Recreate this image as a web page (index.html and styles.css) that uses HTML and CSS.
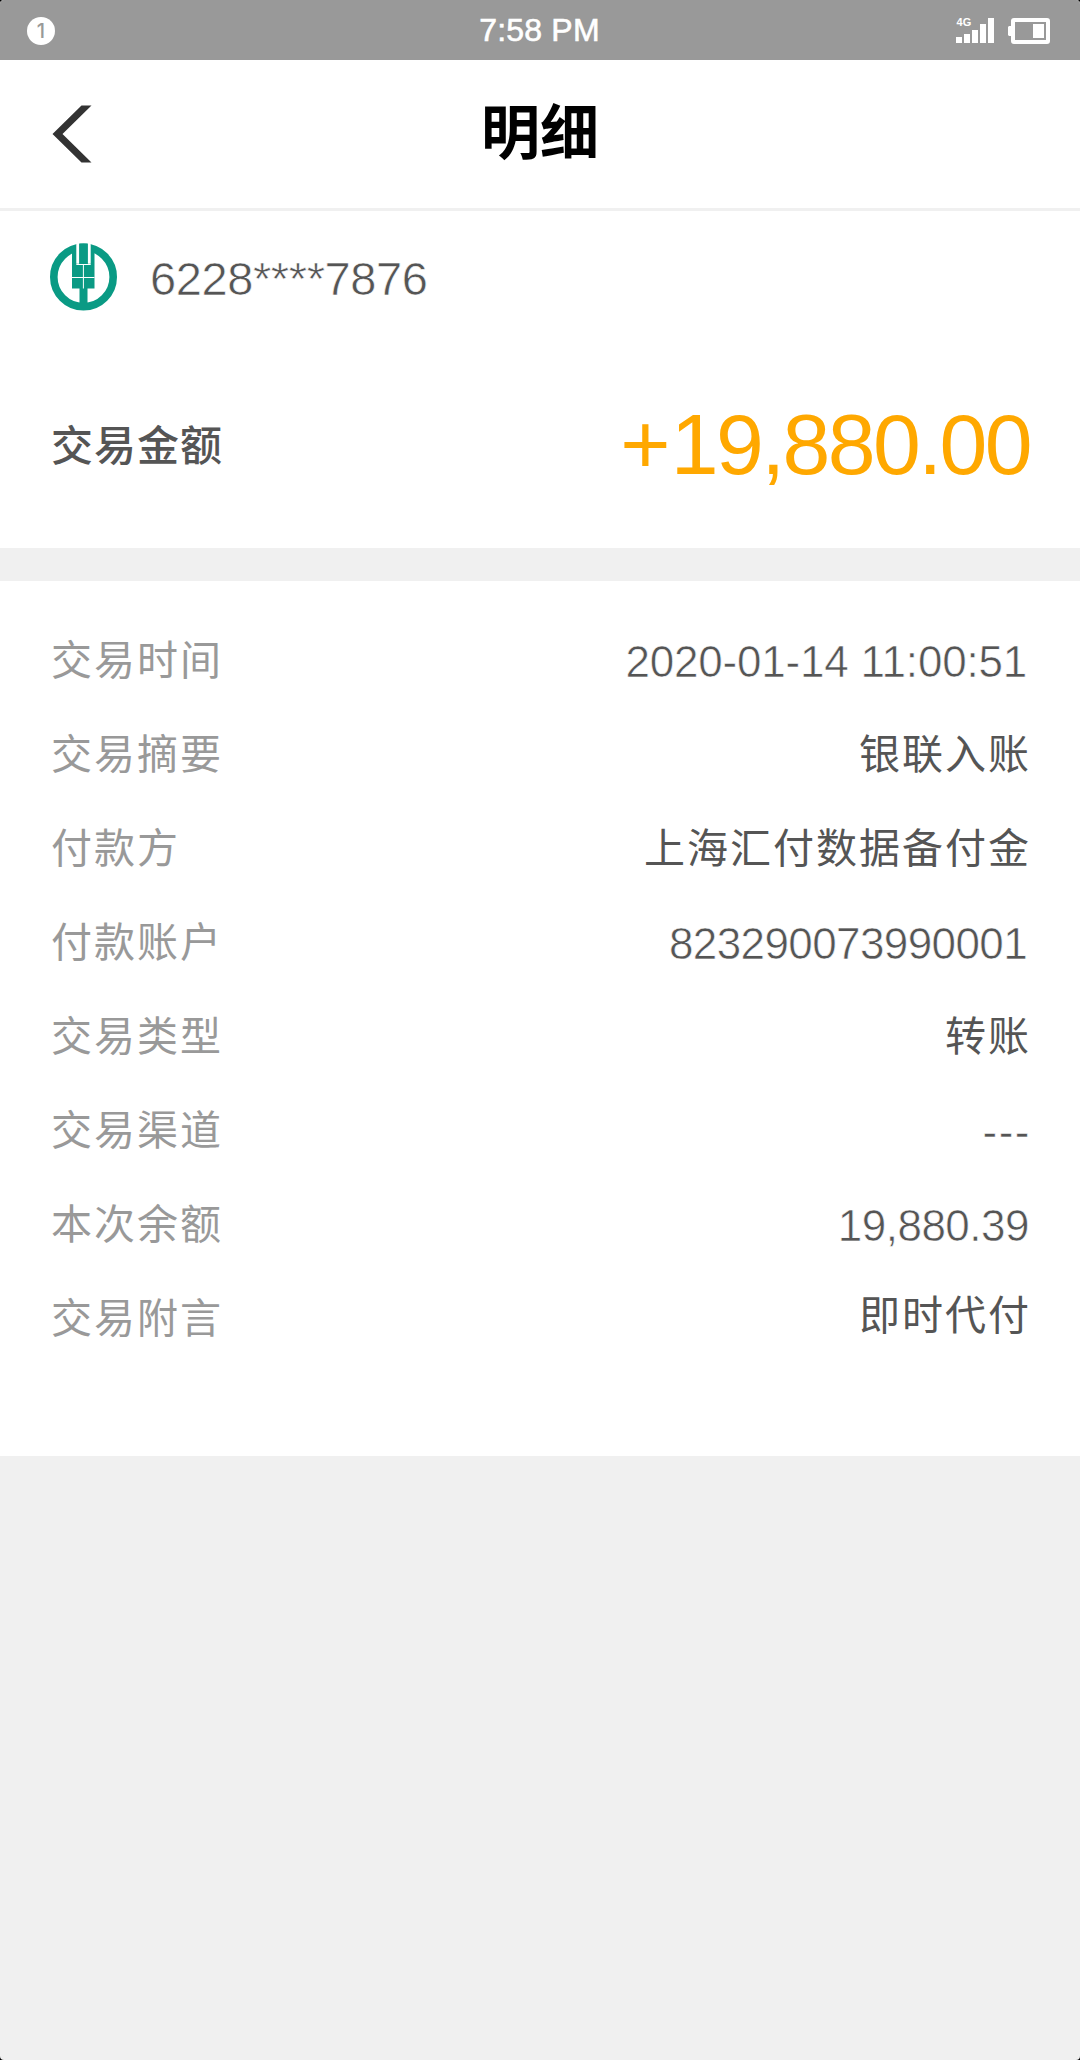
FILE: index.html
```
<!DOCTYPE html>
<html lang="zh-CN">
<head>
    <meta charset="UTF-8">
    <meta name="viewport" content="width=device-width, initial-scale=1.0">
    <title>明细</title>
    <link rel="stylesheet" href="styles.css">
</head>
<body>

    <!-- Status bar -->
    <div class="status-bar">
        <span class="notice">1</span>
        <span class="clock">7:58 PM</span>
        <div class="status-icons">
            <svg class="signal" width="40" height="30" viewBox="0 0 40 30">
                <text x="0.6" y="9.5" class="signal-text">4G</text>
                <path fill="#fff" d="M0 21h6v6H0zM8 18h6v9H8zM16 14h6v13h-6zM24 8h6v19h-6zM32 2h6v25h-6z"/>
            </svg>
            <svg class="battery" width="42" height="26" viewBox="0 0 42 26">
                <rect x="5" y="2" width="35" height="22" rx="1" fill="none" stroke="#fff" stroke-width="4"/>
                <path fill="#fff" d="M1 8h3v10H1l-1-1V9zM25 6h11v14H25z"/>
            </svg>
        </div>
    </div>

    <!-- Header -->
    <header class="header">
        <a href="#" class="back">
            <svg width="40" height="58" viewBox="0 0 40 58">
                <path fill="#333" d="M29.5 0.5H39.5L10.5 29 39.5 57.5H29.5L0.5 29z"/>
            </svg>
        </a>
        <h1>明细</h1>
    </header>

    <!-- Account and amount -->
    <section class="summary">
        <div class="account">
            <svg class="bank-logo" width="68" height="68" viewBox="0 0 68 68">
                <circle cx="34.5" cy="34" r="29.7" fill="none" stroke="#0a9a84" stroke-width="7.6"/>
                <path fill="#0a9a84" d="M23 5h22.500v40.500h-7V63h-8V45.500H23z"/>
                <path fill="#fff" d="M27.300 0h3v20.700h-3zM38.700 0h3v20.700h-3z"/>
                <path fill="#0a9a84" d="M30.300 0.500h8.400v21h-8.400z"/>
                <path fill="none" stroke="#fff" stroke-width="1" d="M27.300 21.500h14.400M23 34.500h22.500M34.400 22v23.500"/>
            </svg>
            <span class="card-no">6228****7876</span>
        </div>
        <div class="amount-row">
            <span class="amount-label">交易金额</span>
            <span class="amount"><span class="sign">+</span>19,880.00</span>
        </div>
    </section>

    <!-- Details -->
    <section class="details">
        <div class="row">
            <span class="label">交易时间</span>
            <span class="value num date">2020-01-14 11:00:51</span>
        </div>
        <div class="row">
            <span class="label">交易摘要</span>
            <span class="value">银联入账</span>
        </div>
        <div class="row">
            <span class="label">付款方</span>
            <span class="value">上海汇付数据备付金</span>
        </div>
        <div class="row">
            <span class="label">付款账户</span>
            <span class="value num serial">823290073990001</span>
        </div>
        <div class="row">
            <span class="label">交易类型</span>
            <span class="value">转账</span>
        </div>
        <div class="row">
            <span class="label">交易渠道</span>
            <span class="value num dashes">---</span>
        </div>
        <div class="row">
            <span class="label">本次余额</span>
            <span class="value num">19,880.39</span>
        </div>
        <div class="row">
            <span class="label">交易附言</span>
            <span class="value remark">即时代付</span>
        </div>
    </section>

</body>
</html>
```
FILE: styles.css
```
* {
    margin: 0;
    padding: 0;
    box-sizing: border-box;
}
html {
    background-color: #000;
}
body {
    font-family: "Liberation Sans", "Noto Sans CJK SC", sans-serif;
    background-color: #f0f0f0;
    color: #555;
    width: 1080px;
    height: 2060px;
    border-radius: 4px;
    overflow: hidden;
}

/* Status bar */
.status-bar {
    height: 60px;
    padding: 0 30px 0 27px;
    background-color: #999;
    color: #fff;
    display: grid;
    grid-template-columns: 1fr auto 1fr;
    align-items: center;
}
.notice {
    width: 28px;
    height: 28px;
    border-radius: 50%;
    background-color: #fff;
    color: #999;
    font-family: Inter, sans-serif;
    font-size: 20px;
    font-weight: 500;
    line-height: 28px;
    text-align: center;
}
.clock {
    font-size: 32px;
    line-height: 60px;
    padding: 0 0 1px 2px;
    letter-spacing: 0.2px;
    -webkit-text-stroke: 0.6px #fff;
}
.status-icons {
    display: flex;
    justify-content: flex-end;
    align-items: center;
    gap: 12px;
}
.signal-text {
    font-size: 11px;
    font-weight: bold;
    fill: #fff;
}

/* Header */
.header {
    height: 151px;
    padding: 0 52px;
    background-color: #fff;
    border-bottom: 3px solid #f0f0f0;
    display: grid;
    grid-template-columns: 1fr auto 1fr;
    align-items: center;
}
.back svg {
    display: block;
}
.header h1 {
    font-family: "Noto Sans CJK SC", sans-serif;
    font-size: 59px;
    font-weight: 700;
    line-height: 80px;
    padding-bottom: 11px;
    color: #000;
}

/* Account and amount */
.summary {
    height: 337px;
    background-color: #fff;
}
.account {
    height: 101px;
    padding: 32px 49px 0;
    display: flex;
    align-items: flex-start;
    gap: 33px;
}
.card-no {
    font-size: 47px;
    line-height: 66px;
    padding-top: 3px;
    letter-spacing: -0.4px;
    -webkit-text-stroke: 0.6px #fff;
}
.amount-row {
    height: 204px;
    margin-top: 30px;
    padding: 0 50px 0 51px;
    display: flex;
    justify-content: space-between;
    align-items: center;
}
.amount-label {
    font-family: "Noto Sans CJK SC", sans-serif;
    font-size: 42px;
    font-weight: 500;
    letter-spacing: 1px;
    padding-bottom: 3px;
}
.amount {
    font-size: 86px;
    letter-spacing: -2.6px;
    color: #ffa800;
}
.sign {
    margin-right: 3px;
}

/* Details */
.details {
    height: 875px;
    margin-top: 33px;
    padding: 29px 51px 0;
    background-color: #fff;
}
.row {
    height: 94px;
    display: flex;
    justify-content: space-between;
    align-items: center;
}
.label,
.value {
    font-family: "Noto Sans CJK SC", sans-serif;
    font-size: 41px;
    line-height: 94px;
    letter-spacing: 2px;
}
.label {
    color: #999;
}
.value {
    margin-right: -2px;
}
.num {
    font-family: "Liberation Sans", sans-serif;
    font-size: 44px;
    letter-spacing: -0.5px;
    margin-right: 0;
    padding-top: 9px;
    -webkit-text-stroke: 0.6px #fff;
}
.date {
    letter-spacing: -0.2px;
    margin-right: 2px;
}
.serial {
    letter-spacing: -0.6px;
    margin-right: 2px;
}
.dashes {
    letter-spacing: 1.5px;
    margin-right: -2px;
}
.remark {
    padding-bottom: 6px;
}
```
